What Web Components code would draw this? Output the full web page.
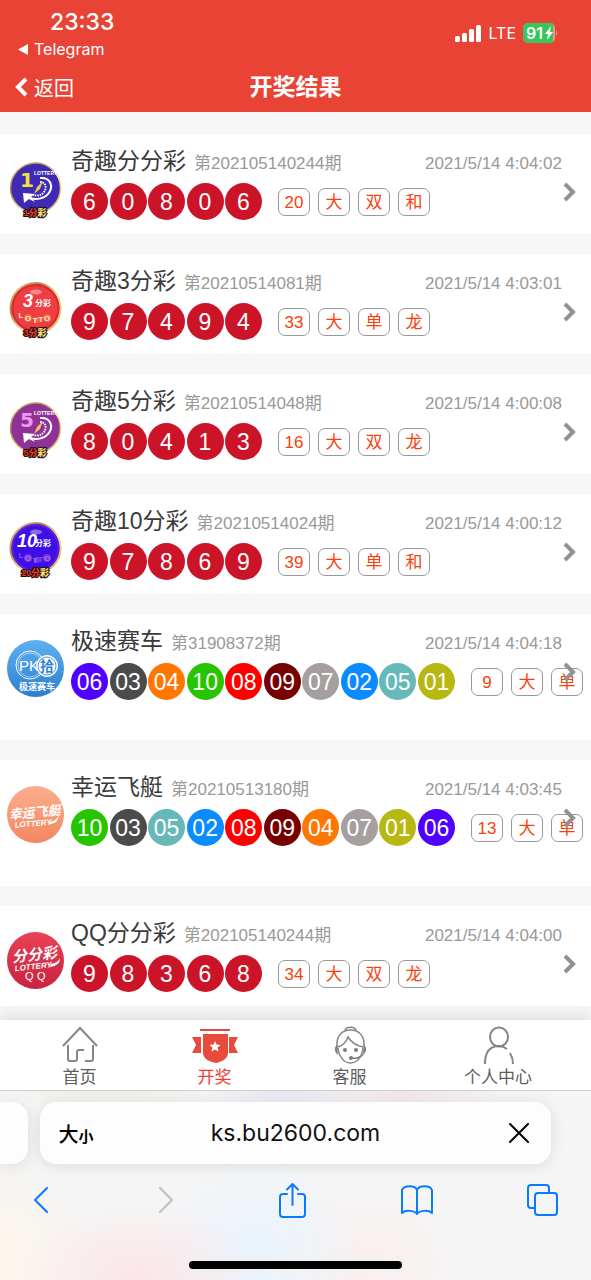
<!DOCTYPE html>
<html lang="zh-CN">
<head>
<meta charset="utf-8">
<meta name="viewport" content="width=device-width, initial-scale=1">
<title>开奖结果</title>
<style>
  body {
    margin: 0;
    font-family: "Liberation Sans", "Noto Sans CJK SC", sans-serif;
    color: #3a3a3a;
  }
</style>
</head>
<body>
<lottery-app>
  <status-bar slot="top"></status-bar>
  <page-header slot="top">开奖结果</page-header>

  <result-card logo="one" balls="6 0 8 0 6" tags="20 大 双 和">
    <span slot="name">奇趣分分彩</span><span slot="issue">第202105140244期</span><span slot="time">2021/5/14 4:04:02</span>
  </result-card>
  <result-card logo="three" balls="9 7 4 9 4" tags="33 大 单 龙">
    <span slot="name">奇趣3分彩</span><span slot="issue">第20210514081期</span><span slot="time">2021/5/14 4:03:01</span>
  </result-card>
  <result-card logo="five" balls="8 0 4 1 3" tags="16 大 双 龙">
    <span slot="name">奇趣5分彩</span><span slot="issue">第20210514048期</span><span slot="time">2021/5/14 4:00:08</span>
  </result-card>
  <result-card logo="ten" balls="9 7 8 6 9" tags="39 大 单 和">
    <span slot="name">奇趣10分彩</span><span slot="issue">第20210514024期</span><span slot="time">2021/5/14 4:00:12</span>
  </result-card>
  <result-card racing logo="pk" balls="06 03 04 10 08 09 07 02 05 01" tags="9 大 单">
    <span slot="name">极速赛车</span><span slot="issue">第31908372期</span><span slot="time">2021/5/14 4:04:18</span>
  </result-card>
  <result-card racing logo="boat" balls="10 03 05 02 08 09 04 07 01 06" tags="13 大 单">
    <span slot="name">幸运飞艇</span><span slot="issue">第20210513180期</span><span slot="time">2021/5/14 4:03:45</span>
  </result-card>
  <result-card logo="qq" balls="9 8 3 6 8" tags="34 大 双 龙">
    <span slot="name">QQ分分彩</span><span slot="issue">第202105140244期</span><span slot="time">2021/5/14 4:04:00</span>
  </result-card>

  <tab-bar slot="bottom">
    <tab-item icon="home">首页</tab-item>
    <tab-item icon="award" active>开奖</tab-item>
    <tab-item icon="service">客服</tab-item>
    <tab-item icon="user">个人中心</tab-item>
  </tab-bar>
  <browser-bar slot="bottom"></browser-bar>
</lottery-app>

<script>
class LotteryApp extends HTMLElement {
  constructor() {
    super();
    this.attachShadow({ mode: "open" });
    this.shadowRoot.innerHTML = `
      <style>
        :host {
          display: flex;
          flex-direction: column;
          height: 100vh;
          overflow: hidden;
          background: #f6f6f6;
        }

        header {
          background: #e94335;
        }

        main {
          flex: 1;
          min-height: 0;
          display: flex;
          flex-direction: column;
          gap: 20px;
          padding-top: 22px;
          overflow-y: auto;
          scrollbar-width: none;
        }
      </style>
      <header><slot name="top"></slot></header>
      <main><slot></slot></main>
      <slot name="bottom"></slot>
    `;
  }
}

class StatusBar extends HTMLElement {
  constructor() {
    super();
    this.attachShadow({ mode: "open" });
    this.shadowRoot.innerHTML = `
      <style>
        :host {
          display: flex;
          justify-content: space-between;
          padding: 8px 32px 0 18px;
          color: #fff;
          font-family: Inter, "Noto Sans", sans-serif;
        }

        .time {
          padding-left: 32px;
          font-size: 23px;
          line-height: 28px;
          font-weight: 500;
        }

        .back {
          display: flex;
          align-items: center;
          gap: 6px;
          color: inherit;
          text-decoration: none;
          font-size: 16px;
          line-height: 26px;
        }

        .signal {
          display: flex;
          align-items: center;
          gap: 7px;
          height: 50px;
          font-size: 16px;
        }
      </style>
      <div>
        <div class="time">23:33</div>
        <a class="back" href="#">
          <svg width="10" height="11" viewBox="0 0 10 11"><path d="M10 0v11L0 5.5z" fill="#fff"/></svg>
          Telegram
        </a>
      </div>
      <div class="signal">
        <svg width="27" height="17" viewBox="0 0 27 17" fill="#fff">
          <rect y="11" width="5" height="6" rx="1.5"/>
          <rect x="7" y="8" width="5" height="9" rx="1.5"/>
          <rect x="14" y="4" width="5" height="13" rx="1.5"/>
          <rect x="21" width="5" height="17" rx="1.5"/>
        </svg>
        <span>LTE</span>
        <svg width="36" height="20" viewBox="0 0 36 20">
          <rect width="32" height="20" rx="5" fill="#e99b80"/>
          <path d="M5 0h25v20H5a5 5 0 0 1-5-5V5a5 5 0 0 1 5-5z" fill="#36c65a"/>
          <path d="M33 7q3 3 0 6z" fill="#f08d80"/>
          <text x="3" y="16" font-size="16" font-weight="600" fill="#fff">91</text>
          <path d="M28 3l-6 8h3l-1 6 6-8h-3z" fill="#fff"/>
        </svg>
      </div>
    `;
  }
}

class PageHeader extends HTMLElement {
  constructor() {
    super();
    this.attachShadow({ mode: "open" });
    this.shadowRoot.innerHTML = `
      <style>
        :host {
          display: grid;
          grid-template-columns: 1fr auto 1fr;
          align-items: center;
          height: 50px;
          padding: 0 15px;
          color: #fff;
        }

        a {
          display: flex;
          align-items: center;
          gap: 6px;
          color: inherit;
          text-decoration: none;
          font-size: 20px;
        }

        h1 {
          margin: 0;
          font-size: 23px;
          line-height: 30px;
          font-weight: 700;
        }
      </style>
      <a href="#">
        <svg width="13" height="20" viewBox="0 0 13 20"><path d="M11 2L3 10l8 8" fill="none" stroke="#fff" stroke-width="4"/></svg>
        返回
      </a>
      <h1><slot></slot></h1>
    `;
  }
}

const gold = `
  <defs><linearGradient id="g" x1="0" x2="1" y2="1">
    <stop offset="0" stop-color="#f6d98a"/><stop offset=".3" stop-color="#b58445"/>
    <stop offset=".6" stop-color="#f8e2a0"/><stop offset="1" stop-color="#d99a40"/>
  </linearGradient></defs>`;

const caption = (text) => `
  <text x="28" y="56" text-anchor="middle" font-size="9" font-weight="900"
    stroke="#1d0d08" stroke-width="2" paint-order="stroke" fill="#e0362b">${text}<tspan fill="#f3df7a">彩</tspan></text>`;

const clockLogo = (num, fill, numFill, text) => `${gold}
  <circle cx="28.5" cy="28" r="25" fill="${fill}" stroke="url(#g)" stroke-width="1.5"/>
  <text x="13" y="27" font-size="20" font-weight="700" font-family="DejaVu Sans" fill="${numFill}">${num}</text>
  <text x="27" y="15" font-size="5" font-weight="700" fill="#fff">LOTTERY</text>
  <path d="M33 18c11-1 14 9 8 16-4 5-12 6-18 4" fill="none" stroke="#fff" stroke-width="2"/>
  <path d="M33 22c6 0 7 6 4 10-3 4-7 4-11 3" fill="none" stroke="#fff" stroke-width="2" stroke-dasharray="1.5 1"/>
  <path d="M16 33l12 1-4 3 4 5-6-3-5 4z" fill="#fff"/>
  <path d="M36 21l-3 8-6 5 3-7z" fill="#f3c25b"/>
  ${caption(text)}`;

const lottoLogo = (num, fill, ring, dots, text) => `${gold}
  <circle cx="28.5" cy="28" r="25" fill="${fill}" stroke="url(#g)" stroke-width="2"/>
  <circle cx="28.5" cy="28" r="23" fill="none" stroke="${ring}" stroke-width="2"/>
  <ellipse cx="29" cy="12" rx="6" ry="2.5" fill="#fff" opacity=".4"/>
  <text x="${num.length > 1 ? 10 : 16}" y="27" font-size="18" font-style="italic" font-weight="700" fill="#fff">${num}</text>
  <text x="28" y="26" font-size="8" font-weight="700" fill="#fff">分彩</text>
  <g fill="${dots}">
    <circle cx="21" cy="38" r="4"/><circle cx="40" cy="38" r="4"/><circle cx="30" cy="40" r="3"/>
  </g>
  <g font-size="8" font-weight="700" text-anchor="middle" fill="#fff" fill-opacity="${num === "3" ? 0.9 : 0.3}">
    <text x="14" y="38">L</text><text x="21" y="41">O</text><text x="28" y="43">T</text><text x="34" y="42">T</text><text x="40" y="41">O</text>
  </g>
  ${caption(text)}`;

const disc = (from, to) => `
  <defs><linearGradient id="d" x2="0" y2="1"><stop stop-color="${from}"/><stop offset="1" stop-color="${to}"/></linearGradient></defs>
  <circle cx="28.5" cy="28.5" r="28.5" fill="url(#d)"/>`;

const logos = {
  one: clockLogo("1", "#3d2ab5", "#f2e23c", "1分"),
  three: lottoLogo("3", "#ee3d43", "#d92a31", "#fa6a2e", "3分"),
  five: clockLogo("5", "#8f3298", "#ee96ee", "5分"),
  ten: lottoLogo("10", "#3b0fe6", "#5c1ee0", "#7d35e0", "10分"),
  pk: `${disc("#5fb0f1", "#2c7fd0")}
    <g fill="none" stroke="#fff">
      <circle cx="23" cy="25" r="14"/><circle cx="23" cy="25" r="12" stroke-width=".5"/>
      <circle cx="40" cy="26" r="10.5" fill="#fff"/><circle cx="40" cy="26" r="9" stroke="#4696df"/>
    </g>
    <text x="12" y="31" font-size="15" fill="#fff">PK</text>
    <text x="40" y="31" font-size="14" font-weight="700" text-anchor="middle" fill="#2f82d3">拾</text>
    <text x="30" y="50" font-size="9" font-weight="700" text-anchor="middle" fill="#fff">极速赛车</text>`,
  boat: `${disc("#fbae8e", "#f28760")}
    <g transform="rotate(-5 28 30)" fill="#fff" font-weight="700" font-style="italic">
      <text x="28" y="31" font-size="13" text-anchor="middle">幸运飞艇</text>
      <text x="7" y="40" font-size="8">LOTTERY</text>
    </g>
    <path d="M43 36q6-1 9-7-1 9-10 9z" fill="#fff"/>`,
  qq: `${disc("#ea4256", "#c9223f")}
    <g transform="rotate(-6 28 28)" fill="#fff" font-weight="700" font-style="italic">
      <text x="28" y="28" font-size="15" text-anchor="middle">分分彩</text>
      <text x="7" y="37" font-size="8">LOTTERY</text>
    </g>
    <path d="M44 32q7-1 9-6 0 8-10 9z" fill="#fff"/>
    <text x="18" y="48" font-size="11" fill="#fff">Q</text><text x="30" y="48" font-size="11" fill="#fff">Q</text>`
};

class LotteryLogo extends HTMLElement {
  constructor() {
    super();
    this.attachShadow({ mode: "open" });
  }

  connectedCallback() {
    this.shadowRoot.innerHTML = `
      <style>
        :host {
          display: block;
        }

        svg {
          display: block;
          font-family: "Liberation Sans", "Noto Sans CJK SC", sans-serif;
        }
      </style>
      <svg width="57" height="57" viewBox="0 0 57 57" overflow="visible">${logos[this.getAttribute("name")]}</svg>
    `;
  }
}

// racing games give each number its own colour
const ballColors = {
  "01": "#b8b813",
  "02": "#0a8bff",
  "03": "#4b4b4b",
  "04": "#ff7600",
  "05": "#67b8b9",
  "06": "#5000ff",
  "07": "#a69f9f",
  "08": "#ff0000",
  "09": "#760000",
  "10": "#27c400"
};

class LotteryBall extends HTMLElement {
  constructor() {
    super();
    this.attachShadow({ mode: "open" });
    this.shadowRoot.innerHTML = `
      <style>
        :host {
          display: flex;
          align-items: center;
          justify-content: center;
          width: 37px;
          height: 37px;
          border-radius: 50%;
          background: var(--ball-color, #cc1429);
          color: #fff;
          font-size: 23px;
          line-height: 24px;
        }
      </style>
      <slot></slot>
    `;
  }
}

class ResultTag extends HTMLElement {
  constructor() {
    super();
    this.attachShadow({ mode: "open" });
    this.shadowRoot.innerHTML = `
      <style>
        :host {
          display: flex;
          align-items: center;
          justify-content: center;
          box-sizing: border-box;
          width: 32px;
          height: 28px;
          padding-top: 2px;
          border: 1px solid #999;
          border-radius: 7px;
          color: #f8400c;
          font-size: 17px;
          line-height: 24px;
        }
      </style>
      <slot></slot>
    `;
  }
}

class ResultCard extends HTMLElement {
  constructor() {
    super();
    this.attachShadow({ mode: "open" });
  }

  connectedCallback() {
    const balls = this.getAttribute("balls").split(" ");
    const tags = this.getAttribute("tags").split(" ");
    this.shadowRoot.innerHTML = `
      <style>
        :host {
          position: relative;
          display: flex;
          flex-shrink: 0;
          gap: 7px;
          padding: 12px 0 14px 7px;
          background: #fff;
        }

        :host([racing]) {
          padding-bottom: 40px;
        }

        lottery-logo {
          margin-top: 14px;
        }

        .content {
          flex: 1;
          min-width: 0;
        }

        .info {
          display: flex;
          align-items: baseline;
          gap: 8px;
          height: 30px;
          padding-right: 29px;
          color: #999;
          font-size: 17px;
          line-height: 30px;
          white-space: nowrap;
        }

        h2 {
          margin: 0;
          color: #3a3a3a;
          font-size: 23px;
          font-weight: 400;
        }

        .time {
          margin-left: auto;
        }

        .result, .tags {
          display: flex;
          align-items: center;
        }

        .result {
          margin-top: 7px;
          gap: 16px;
        }

        .balls {
          display: flex;
          justify-content: space-between;
          width: 191px;
        }

        :host([racing]) .balls {
          width: 384px;
        }

        .tags {
          gap: 8px;
        }

        .more {
          position: absolute;
          top: 48px;
          right: 15px;
        }

        .more svg {
          display: block;
        }
      </style>
      <lottery-logo name="${this.getAttribute("logo")}"></lottery-logo>
      <div class="content">
        <div class="info">
          <h2><slot name="name"></slot></h2>
          <slot name="issue"></slot>
          <div class="time"><slot name="time"></slot></div>
        </div>
        <div class="result">
          <div class="balls">
            ${balls.map((n) => `<lottery-ball style="--ball-color: ${ballColors[n] || "#cc1429"}">${n}</lottery-ball>`).join("")}
          </div>
          <div class="tags">${tags.map((t) => `<result-tag>${t}</result-tag>`).join("")}</div>
        </div>
      </div>
      <a class="more" href="#" aria-label="更多">
        <svg width="14" height="20" viewBox="0 0 14 20"><path d="M3 2l8 8-8 8" fill="none" stroke="#929292" stroke-width="4"/></svg>
      </a>
    `;
  }
}

class TabBar extends HTMLElement {
  constructor() {
    super();
    this.attachShadow({ mode: "open" });
    this.shadowRoot.innerHTML = `
      <style>
        :host {
          display: block;
          position: relative;
          background: #fff;
          box-shadow: 0 0 16px rgba(0,0,0,0.14);
        }

        nav {
          display: grid;
          grid-template-columns: 1fr 1fr 1fr 1.2fr;
          padding: 5px 12px 0;
          height: 65px;
        }
      </style>
      <nav><slot></slot></nav>
    `;
  }
}

const tabIcons = {
  home: `<path d="M6 21L23 3l17 18M11 20v14q0 2 2 2h5q2 0 2-2v-7q0-2 2-2h5M36 20v14q0 2-2 2h-6"/>`,
  award: `<g fill="#e84b3c" stroke="none">
      <path d="M8 4h30v2H8zM0 12h9v16H0l4-8zM46 12h-9v16h9l-4-8z"/>
      <path d="M11 9h25v19c0 6-7 9-12 10-6-1-13-4-13-10z"/>
      <path d="M23 16l1.500 3.500 4 .5-3 2.500 1 4-3.500-2-3.500 2 1-4-3-2.500 4-.5z" fill="#fff"/>
    </g>`,
  service: `<g stroke-width="1.5">
      <path d="M18 6c0-5 11-5 11 0M10 22C9 11 15 5 23.500 5S38 11 37 22"/>
      <path d="M11 23c1 9 6 15 12.500 15S35 32 36 23M11 22q7-2 10-10 5 8 15 10"/>
      <path d="M36 29q-3 5-11 4"/>
      <path d="M10 21q-3 3 0 7zM37 21q3 3 0 7z" fill="#7c7c7c"/>
      <g fill="#7c7c7c" stroke="none">
        <circle cx="18" cy="25" r="2"/><circle cx="29" cy="25" r="2"/><circle cx="24" cy="33" r="2"/>
      </g>
    </g>`,
  user: `<ellipse cx="24" cy="12" rx="9" ry="9.5"/><path d="M10 39c0-12 5-18 14-18q4 0 8 3M35 28q3 5 3 11"/>`
};

class TabItem extends HTMLElement {
  constructor() {
    super();
    this.attachShadow({ mode: "open" });
  }

  connectedCallback() {
    this.shadowRoot.innerHTML = `
      <style>
        a {
          display: flex;
          flex-direction: column;
          align-items: center;
          color: #5e5e5e;
          text-decoration: none;
          font-size: 17px;
          line-height: 26px;
        }

        :host([active]) a {
          color: #ee4035;
        }

        svg {
          fill: none;
          stroke: #858585;
          stroke-width: 2;
        }
      </style>
      <a href="#">
        <svg width="46" height="40" viewBox="0 0 46 40">${tabIcons[this.getAttribute("icon")]}</svg>
        <slot></slot>
      </a>
    `;
  }
}

class BrowserBar extends HTMLElement {
  constructor() {
    super();
    this.attachShadow({ mode: "open" });
    this.shadowRoot.innerHTML = `
      <style>
        :host {
          display: block;
          position: relative;
          border-top: 1px solid #cfcccd;
          overflow: hidden;
          font-family: Inter, "Noto Sans CJK SC", sans-serif;
          background:
            radial-gradient(ellipse 20% 40% at 23% 98%, #fce5e7, transparent),
            radial-gradient(ellipse 18% 50% at 43% 85%, #e9f3fc, transparent),
            radial-gradient(ellipse 16% 40% at 62% 90%, #faeeee, transparent),
            radial-gradient(ellipse 15% 50% at 0% 85%, #fdf6ec, transparent),
            radial-gradient(ellipse 18% 10% at 18% 0%, #edf0e6, transparent),
            radial-gradient(ellipse 14% 10% at 48% 0%, #e8e6f3, transparent),
            radial-gradient(ellipse 18% 10% at 68% 0%, #f2e5e9, transparent),
            #f5f5f5;
        }

        .tabs {
          display: flex;
          gap: 12px;
          padding: 11px 40px 0 0;
        }

        .previous, .address {
          background: #fdfdfd;
          box-shadow: 0 2px 16px rgba(0,0,0,0.1);
        }

        .previous {
          width: 28px;
          border-radius: 0 16px 16px 0;
        }

        .address {
          flex: 1;
          display: grid;
          grid-template-columns: 48px 1fr 48px;
          align-items: center;
          height: 62px;
          padding: 0 8px;
          border-radius: 16px;
        }

        button {
          display: flex;
          align-items: center;
          justify-content: center;
          padding: 0;
          border: 0;
          background: none;
          color: #000;
          font: inherit;
        }

        .size {
          align-items: baseline;
          font-size: 20px;
          font-weight: 500;
          padding-left: 8px;
        }

        .size small {
          font-size: 15px;
          font-weight: 700;
        }

        input {
          min-width: 0;
          padding: 0;
          border: 0;
          background: none;
          color: #111;
          font: inherit;
          font-size: 23px;
          text-align: center;
        }

        .tools {
          display: flex;
          justify-content: space-between;
          padding: 14px 27px 0 19px;
        }

        .tools button {
          width: 44px;
          height: 44px;
        }

        .tools svg {
          fill: none;
          stroke: #0a7aff;
          stroke-width: 2;
          stroke-linecap: round;
          stroke-linejoin: round;
        }

        .tools .off {
          stroke: #bfbfc1;
        }

        .indicator {
          width: 36%;
          height: 8px;
          margin: 39px auto 11px;
          border-radius: 4px;
          background: #000;
        }
      </style>
      <div class="tabs">
        <div class="previous"></div>
        <div class="address">
          <button class="size" aria-label="大小">大<small>小</small></button>
          <input type="text" value="ks.bu2600.com" aria-label="地址">
          <button aria-label="停止">
            <svg width="20" height="20" viewBox="0 0 20 20"><path d="M1 1l18 18M19 1L1 19" stroke="#000" stroke-width="2" stroke-linecap="round"/></svg>
          </button>
        </div>
      </div>
      <div class="tools">
        <button aria-label="后退"><svg width="16" height="28" viewBox="0 0 16 28"><path d="M14 2L2 14l12 12"/></svg></button>
        <button aria-label="前进" disabled><svg class="off" width="16" height="28" viewBox="0 0 16 28"><path d="M2 2l12 12L2 26"/></svg></button>
        <button aria-label="分享"><svg width="28" height="36" viewBox="0 0 28 36"><path d="M9 12H5q-3 0-3 3v17q0 3 3 3h19q3 0 3-3V15q0-3-3-3h-4M14.500 23V2M9 7.500L14.500 2 20 7.500"/></svg></button>
        <button aria-label="书签"><svg width="34" height="32" viewBox="0 0 34 32"><path d="M17 6v24M17 6C15 1 4 1 2 6v23c3-3 12-3 15 1M17 6c2-5 13-5 15 0v23c-3-3-12-3-15 1"/></svg></button>
        <button aria-label="标签页"><svg width="34" height="34" viewBox="0 0 34 34"><rect x="10" y="10" width="22" height="22" rx="3"/><path d="M9 25H6q-3 0-3-3V5q0-3 3-3h15q3 0 3 3v4"/></svg></button>
      </div>
      <div class="indicator"></div>
    `;
  }
}

customElements.define("lottery-app", LotteryApp);
customElements.define("status-bar", StatusBar);
customElements.define("page-header", PageHeader);
customElements.define("lottery-logo", LotteryLogo);
customElements.define("lottery-ball", LotteryBall);
customElements.define("result-tag", ResultTag);
customElements.define("result-card", ResultCard);
customElements.define("tab-bar", TabBar);
customElements.define("tab-item", TabItem);
customElements.define("browser-bar", BrowserBar);
</script>
</body>
</html>
